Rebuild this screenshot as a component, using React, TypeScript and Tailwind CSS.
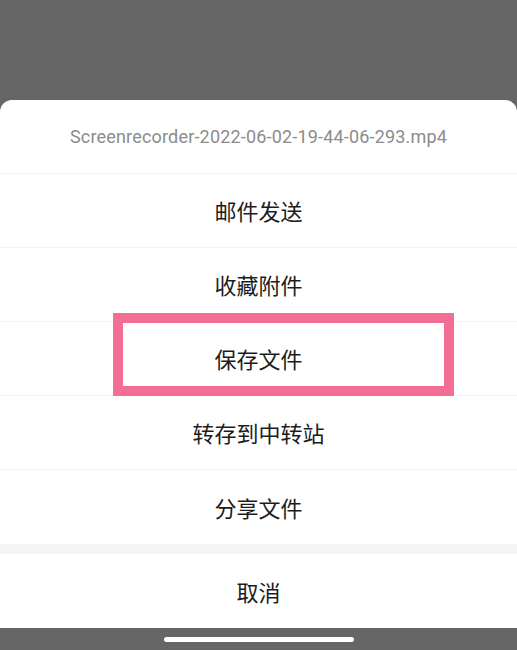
import React from "react";

const actions = ["邮件发送", "收藏附件", "保存文件", "转存到中转站", "分享文件"];

const cjk = "font-['Noto_Sans_CJK_SC','Noto_Sans',sans-serif]";

export default function App() {
  return (
    <div className="w-[517px] h-[650px] bg-[#666666] flex flex-col overflow-hidden">
      {/* dimmed backdrop */}
      <div className="h-[100px] shrink-0" />

      {/* action sheet */}
      <div className="bg-white rounded-t-[12px] flex flex-col">
        <div className="h-[74px] flex items-center justify-center border-b border-[#f3f3f3]">
          <span className="font-['Roboto',sans-serif] text-[18px] text-[#8c8c8c] tracking-[0.18px]">
            Screenrecorder-2022-06-02-19-44-06-293.mp4
          </span>
        </div>

        {actions.map((label, i) => (
          <div
            key={label}
            className={`relative h-[74px] flex items-center justify-center ${
              i < actions.length - 1 ? "border-b border-[#f3f3f3]" : ""
            }`}
          >
            <span className={`${cjk} text-[22px] text-[#1c1c1c]`}>{label}</span>
            {label === "保存文件" && (
              <div className="absolute left-[113px] top-[-9px] w-[341px] h-[83px] border-[10px] border-[#f26e94]" />
            )}
          </div>
        ))}

        <div className="h-[10px] bg-[#f5f5f5]" />

        <div className="h-[74px] flex items-center justify-center">
          <span className={`${cjk} text-[22px] text-[#1c1c1c]`}>取消</span>
        </div>
      </div>

      {/* home indicator */}
      <div className="flex-1 flex items-center justify-center">
        <div className="w-[190px] h-[5px] rounded-full bg-white" />
      </div>
    </div>
  );
}
